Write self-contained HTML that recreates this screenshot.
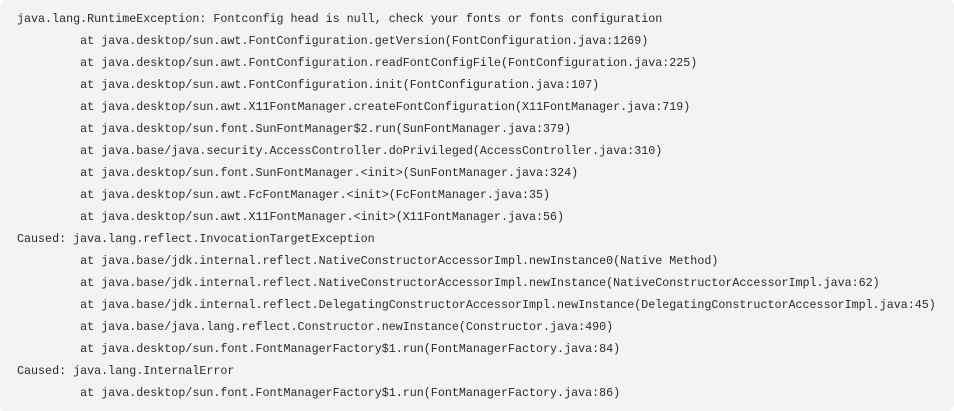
<!DOCTYPE html>
<html><head><style>
html,body{margin:0;padding:0;background:#fff;}
.box{width:954px;height:411px;background:#f3f3f3;border-radius:6px;box-sizing:border-box;padding:8px 0 0 17px;}
pre{margin:0;font-family:"Liberation Mono",monospace;font-size:11.7px;line-height:22px;color:#2a2a2a;}
</style></head><body><div class="box"><pre>java.lang.RuntimeException: Fontconfig head is null, check your fonts or fonts configuration
         at java.desktop/sun.awt.FontConfiguration.getVersion(FontConfiguration.java:1269)
         at java.desktop/sun.awt.FontConfiguration.readFontConfigFile(FontConfiguration.java:225)
         at java.desktop/sun.awt.FontConfiguration.init(FontConfiguration.java:107)
         at java.desktop/sun.awt.X11FontManager.createFontConfiguration(X11FontManager.java:719)
         at java.desktop/sun.font.SunFontManager$2.run(SunFontManager.java:379)
         at java.base/java.security.AccessController.doPrivileged(AccessController.java:310)
         at java.desktop/sun.font.SunFontManager.&lt;init&gt;(SunFontManager.java:324)
         at java.desktop/sun.awt.FcFontManager.&lt;init&gt;(FcFontManager.java:35)
         at java.desktop/sun.awt.X11FontManager.&lt;init&gt;(X11FontManager.java:56)
Caused: java.lang.reflect.InvocationTargetException
         at java.base/jdk.internal.reflect.NativeConstructorAccessorImpl.newInstance0(Native Method)
         at java.base/jdk.internal.reflect.NativeConstructorAccessorImpl.newInstance(NativeConstructorAccessorImpl.java:62)
         at java.base/jdk.internal.reflect.DelegatingConstructorAccessorImpl.newInstance(DelegatingConstructorAccessorImpl.java:45)
         at java.base/java.lang.reflect.Constructor.newInstance(Constructor.java:490)
         at java.desktop/sun.font.FontManagerFactory$1.run(FontManagerFactory.java:84)
Caused: java.lang.InternalError
         at java.desktop/sun.font.FontManagerFactory$1.run(FontManagerFactory.java:86)</pre></div></body></html>
